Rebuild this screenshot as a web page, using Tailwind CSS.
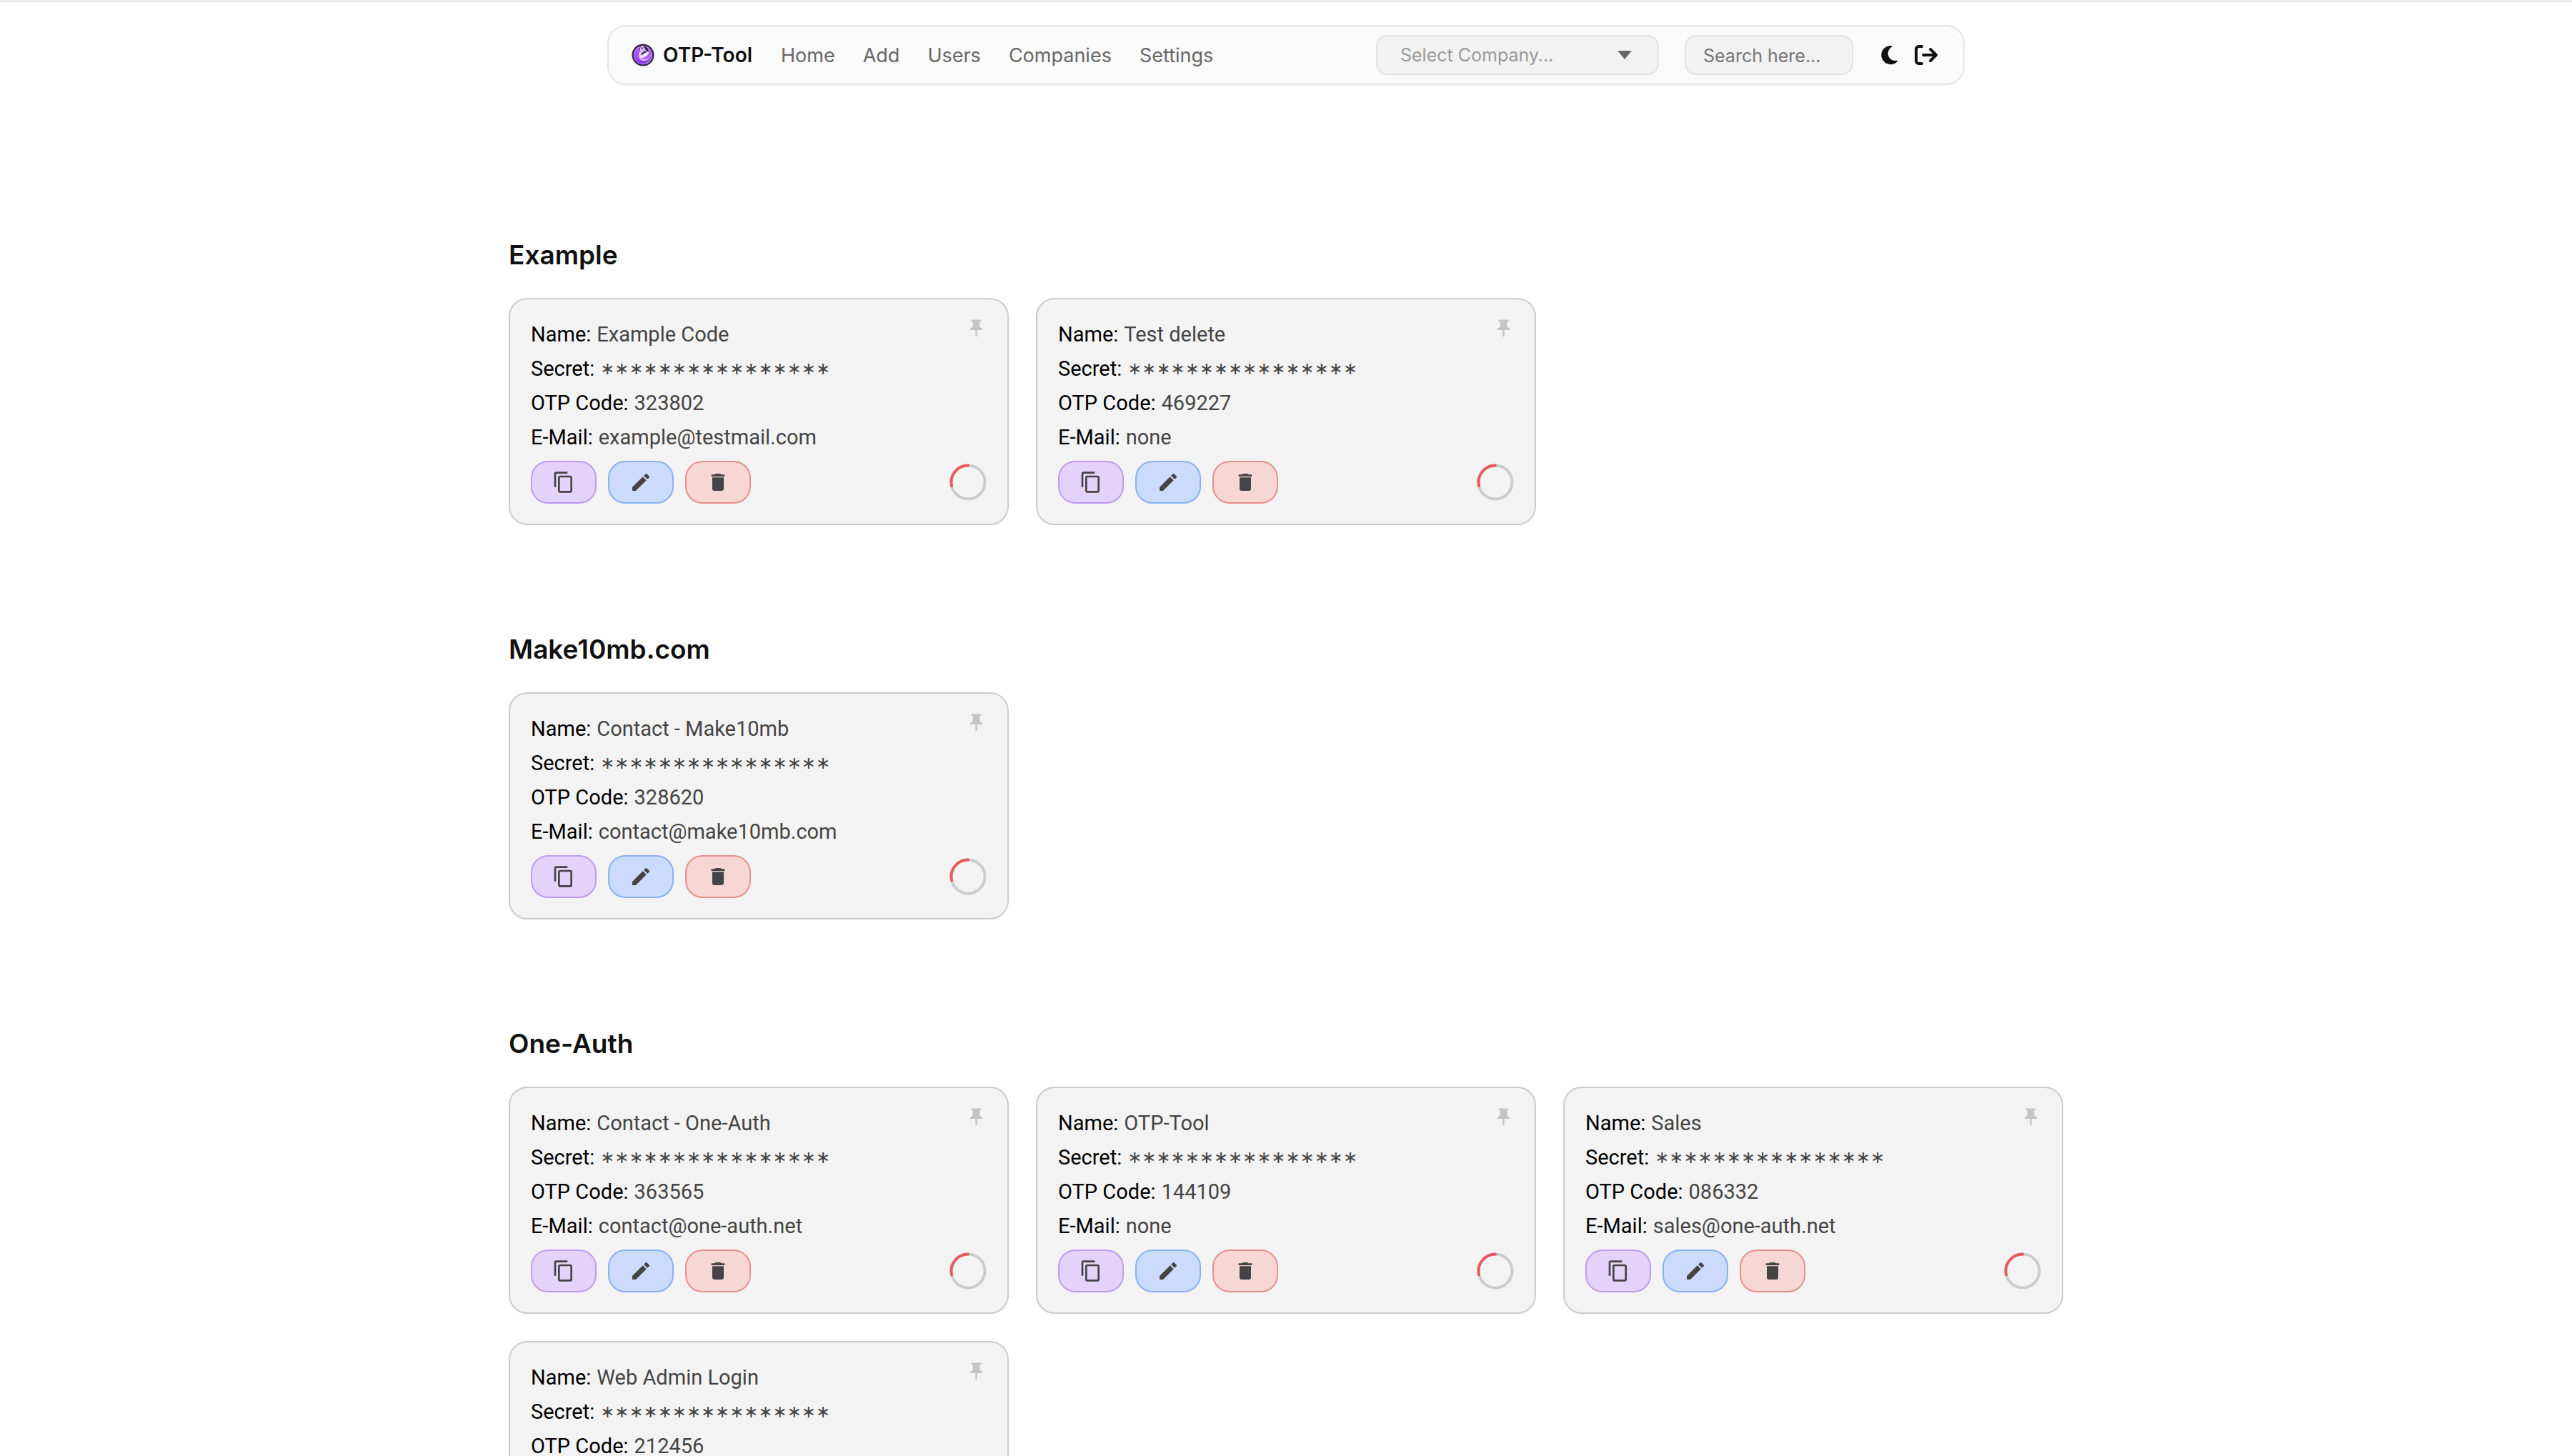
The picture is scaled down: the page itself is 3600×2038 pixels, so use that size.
<!DOCTYPE html>
<html lang="en">
<head>
<meta charset="utf-8">
<meta name="viewport" content="width=device-width, initial-scale=1">
<title>OTP-Tool</title>
<script src="https://cdn.jsdelivr.net/npm/@tailwindcss/browser@4"></script>
</head>
<body class="bg-white font-['Inter',sans-serif] text-[#111111]">
<svg class="hidden" aria-hidden="true">
  <symbol id="pin" viewBox="0 0 24 24"><path d="M16 9V4h1c.55 0 1-.45 1-1s-.45-1-1-1H7c-.55 0-1 .45-1 1s.45 1 1 1h1v5c0 1.66-1.34 3-3 3v2h5.97v7l1 1 1-1v-7H19v-2c-1.66 0-3-1.34-3-3z"/></symbol>
  <symbol id="copy" viewBox="0 0 24 24"><path d="M16 1H4c-1.1 0-2 .9-2 2v14h2V3h12V1zm3 4H8c-1.1 0-2 .9-2 2v14c0 1.1.9 2 2 2h11c1.1 0 2-.9 2-2V7c0-1.1-.9-2-2-2zm0 16H8V7h11v14z"/></symbol>
  <symbol id="edit" viewBox="0 0 24 24"><path d="M3 17.25V21h3.75L17.81 9.94l-3.75-3.75L3 17.25zM20.71 7.04c.39-.39.39-1.02 0-1.41l-2.34-2.34c-.39-.39-1.02-.39-1.41 0l-1.83 1.83 3.75 3.75 1.83-1.83z"/></symbol>
  <symbol id="trash" viewBox="0 0 24 24"><path d="M6 19c0 1.1.9 2 2 2h8c1.1 0 2-.9 2-2V7H6v12zM19 4h-3.5l-1-1h-5l-1 1H5v2h14V4z"/></symbol>
  <symbol id="ring" viewBox="0 0 52 52"><circle cx="26" cy="26" r="23.5" fill="none" stroke="#cccccc" stroke-width="4"/><path d="M26 2.5A23.5 23.5 0 0 0 3.1 31.29" fill="none" stroke="#e85b59" stroke-width="4" stroke-linecap="round"/></symbol>
</svg>

<div class="h-[3px] border-b border-[#dddddd] bg-[#efefef]"></div>

<header class="px-8 pt-8">
  <nav class="mx-auto flex max-w-[1900px] items-center rounded-[26px] border-2 border-[#e5e5e5] bg-[#fafafa] py-3 pr-9 pl-8">
    <a href="#" class="flex items-center gap-3 text-[28px] leading-8 font-semibold">
      <svg class="size-8" viewBox="0 0 32 32" aria-hidden="true">
        <defs><linearGradient id="fox" x1="0" y1="0" x2="1" y2="1"><stop offset="0" stop-color="#b878f5"/><stop offset=".5" stop-color="#9b3df0"/><stop offset="1" stop-color="#7a2fe0"/></linearGradient></defs>
        <circle cx="16" cy="16" r="15.5" fill="#3a2548"/>
        <circle cx="16" cy="16" r="13" fill="#d9bdf8"/>
        <path d="M10 5C4 8 2 14 4 20c2 6 8 9 13 8 7-1 11-6 11-12-2 6-7 9-12 8-5-1-7-5-6-9 0-3 2-5 3-6z" fill="url(#fox)"/>
        <path d="M20 3c5 2 8 6 8.500 11-1 5-5 8-9 8-3 0-5-1-6-3 4 1 8-1 10-4 2-4 0-9-3.500-12z" fill="#b45cf6"/>
        <path d="M12 19c0-4 3-5 6-6 3-1 5-2 5-5 1 5-1 9-5 11-2 1-4 1-6 0z" fill="#f3eafd"/>
        <path d="M18 3c4 2 6 5 5.500 9L20 10z" fill="#2b173d"/>
        <path d="M11 10l1-6 3 3.500L18 3l2 6 2.500 3-5 1-4 3c-2-1-3-3-2.500-6z" fill="#d5b6f8"/>
        <path d="M11 10l1-6 3 3.500L18 3l2 6" fill="none" stroke="#2b173d" stroke-width=".8"/>
        <path d="M14 14l4-3.500 4 1.500-4 1-4 4z" fill="#2b173d"/>
      </svg>
      OTP-Tool
    </a>
    <div class="ml-10 flex gap-[39px] pt-[2px] text-[27px] leading-8 text-[#666666]">
      <a href="#">Home</a>
      <a href="#">Add</a>
      <a href="#">Users</a>
      <a href="#">Companies</a>
      <a href="#">Settings</a>
    </div>
    <div class="relative ml-auto w-[396px]">
      <select aria-label="Select Company" class="block h-14 w-full appearance-none rounded-2xl border-2 border-[#e2e2e2] bg-[#f2f2f2] px-8 pt-[2px] text-[25px] text-[#999999]">
        <option>Select Company...</option>
      </select>
      <svg class="pointer-events-none absolute top-[22px] right-[38px] h-3 w-5" viewBox="0 0 20 12" fill="#666666" aria-hidden="true"><path d="M0 0h20L10 12z"/></svg>
    </div>
    <input type="search" aria-label="Search" placeholder="Search here..." class="ml-9 h-14 w-[236px] rounded-2xl border-2 border-[#e2e2e2] bg-[#f2f2f2] px-6 pt-[2px] text-[25px] placeholder:text-[#757575]">
    <button type="button" aria-label="Dark mode" class="ml-[39px]"><svg class="h-[30px] w-[23px]" viewBox="0 0 384 512" fill="#111111"><path d="M223.5 32C100 32 0 132.3 0 256S100 480 223.5 480c60.6 0 115.5-24.2 155.8-63.4c5-4.9 6.3-12.5 3.1-18.7s-10.1-9.7-17-8.5c-9.8 1.7-19.8 2.6-30.1 2.6c-96.9 0-175.5-78.8-175.5-176c0-65.8 36-123.1 89.3-153.3c6.1-3.5 9.2-10.5 7.7-17.3s-7.3-11.9-14.3-12.5c-6.3-.5-12.6-.8-19-.8z"/></svg></button>
    <button type="button" aria-label="Log out" class="ml-6"><svg class="size-8" viewBox="0 0 512 512" fill="#111111"><path d="M502.6 278.6c12.5-12.5 12.5-32.8 0-45.3l-128-128c-12.5-12.5-32.8-12.5-45.3 0s-12.5 32.8 0 45.3L402.7 224 192 224c-17.7 0-32 14.3-32 32s14.3 32 32 32l210.7 0-73.4 73.4c-12.5 12.5-12.5 32.8 0 45.3s32.8 12.5 45.3 0l128-128zM160 96c17.7 0 32-14.3 32-32s-14.3-32-32-32L96 32C43 32 0 75 0 128L0 384c0 53 43 96 96 96l64 0c17.7 0 32-14.3 32-32s-14.3-32-32-32l-64 0c-17.7 0-32-14.3-32-32l0-256c0-17.7 14.3-32 32-32l64 0z"/></svg></button>
  </nav>
</header>

<main id="companies" class="mx-auto flex max-w-[2176px] flex-col gap-[150px] pt-[214px] pb-[150px]"></main>

<script>
const companies = [
  ["Example", [["Example Code", "323802", "example@testmail.com"], ["Test delete", "469227", "none"]]],
  ["Make10mb.com", [["Contact - Make10mb", "328620", "contact@make10mb.com"]]],
  ["One-Auth", [["Contact - One-Auth", "363565", "contact@one-auth.net"], ["OTP-Tool", "144109", "none"], ["Sales", "086332", "sales@one-auth.net"], ["Web Admin Login", "212456", "none"]]],
];
const row = (label, value, cls = "") => `<div class="flex gap-2"><dt class="text-black">${label}:</dt><dd class="${cls}">${value}</dd></div>`;
const action = (icon, label, cls) => `<button type="button" aria-label="${label}" class="flex h-[60px] w-[92px] items-center justify-center rounded-3xl border-2 fill-[#444444] ${cls}"><svg class="size-8"><use href="#${icon}"/></svg></button>`;
const card = ([name, code, mail]) => `
  <article class="relative rounded-[26px] border-2 border-[#cccccc] bg-[#f3f3f3] px-[29px] pt-[25px] pb-7 font-['Roboto',sans-serif] text-[29px] leading-[48px] text-[#444444]">
    <button type="button" aria-label="Pin" class="absolute top-[26px] right-[29px]"><svg class="size-[29px]" fill="#c4c4c4"><use href="#pin"/></svg></button>
    <dl>
      ${row("Name", name)}
      ${row("Secret", "∗".repeat(16), "font-['DejaVu_Sans',sans-serif] text-[24px]")}
      ${row("OTP Code", code)}
      ${row("E-Mail", mail)}
    </dl>
    <div class="mt-[9px] flex items-center gap-4">
      ${action("copy", "Copy", "border-[#be9bf0] bg-[#e3d2fa]")}
      ${action("edit", "Edit", "border-[#8ab0f8] bg-[#ccdbfb]")}
      ${action("trash", "Delete", "border-[#e78f8b] bg-[#f7d7d4]")}
      <svg class="ml-auto size-[52px]" aria-hidden="true"><use href="#ring"/></svg>
    </div>
  </article>`;
document.getElementById("companies").innerHTML = companies.map(([title, cards]) => `
  <section>
    <h2 class="mb-9 text-[37px] leading-[48px] font-semibold">${title}</h2>
    <div class="grid grid-cols-3 gap-[38px]">${cards.map(card).join("")}</div>
  </section>`).join("");
</script>
</body>
</html>
